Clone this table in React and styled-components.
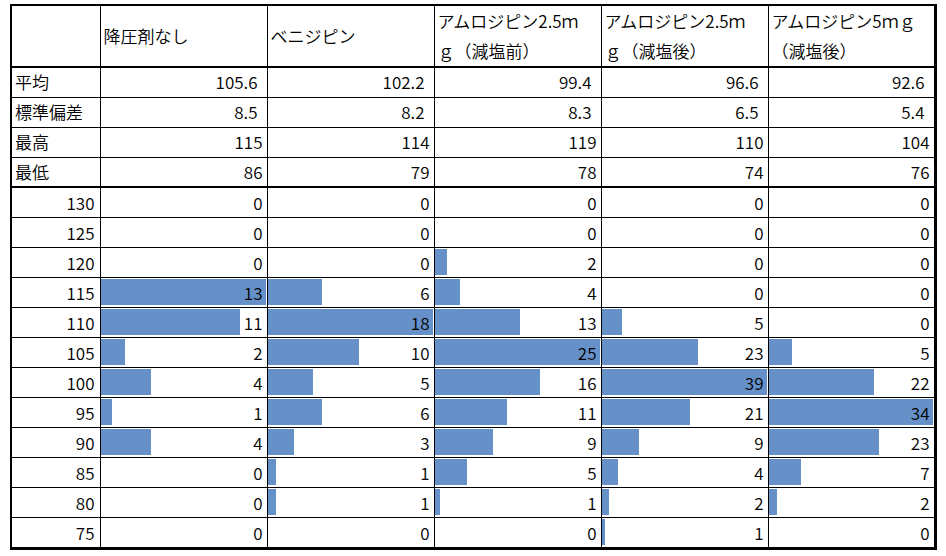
import styled, { createGlobalStyle } from 'styled-components';

const GlobalStyle = createGlobalStyle`
	body {
		margin: 0;
		background: #ffffff;
		font-family: "Noto Sans CJK JP", "Noto Sans", sans-serif;
		font-weight: 350;
		color: #000000;
	}
`;

const Page = styled.div`
	padding: 4px 0 0 10px;
`;

const Sheet = styled.table`
	border-collapse: collapse;
	table-layout: fixed;
	border: 2px solid #000;
	border-right-width: 3px;
	border-bottom-width: 3px;
	font-size: 17px;
	col:first-child { width: 89px; }
	col { width: 167px; }
`;

const HeadRow = styled.tr`
	height: 61px;
	border-bottom: 2px solid #000;
`;

const HeadCell = styled.th`
	border: 1px solid #000;
	padding: 0 3px;
	font-weight: inherit;
	text-align: left;
	vertical-align: middle;
	line-height: 30px;
	white-space: nowrap;
`;

const Row = styled.tr`
	height: 30px;
	${(p) => p.$last && 'border-bottom: 2px solid #000;'}
`;

const Label = styled.td`
	border: 1px solid #000;
	padding: 0 3px;
	text-align: ${(p) => (p.$right ? 'right' : 'left')};
	padding-right: ${(p) => (p.$right ? '5px' : '3px')};
	line-height: 28px;
	white-space: nowrap;
`;

const Num = styled.td`
	border: 1px solid #000;
	padding: 0 ${(p) => (p.$decimal ? '9px' : '4px')} 0 0;
	text-align: right;
	line-height: 28px;
`;

const BarCell = styled.td`
	border: 1px solid #000;
	padding: 0;
`;

const BarBox = styled.div`
	position: relative;
	height: 29px;
`;

const Bar = styled.div`
	position: absolute;
	left: 0;
	top: 1px;
	bottom: 2px;
	background: #6690c8;
`;

const BarValue = styled.span`
	position: relative;
	display: block;
	text-align: right;
	padding-right: 4px;
	line-height: 29px;
`;

const headers = [
	['降圧剤なし'],
	['ベニジピン'],
	['アムロジピン2.5ｍ', 'ｇ（減塩前）'],
	['アムロジピン2.5ｍ', 'ｇ（減塩後）'],
	['アムロジピン5ｍｇ', '（減塩後）'],
];

const stats = [
	{ label: '平均', values: ['105.6', '102.2', '99.4', '96.6', '92.6'], decimal: true },
	{ label: '標準偏差', values: ['8.5', '8.2', '8.3', '6.5', '5.4'], decimal: true },
	{ label: '最高', values: ['115', '114', '119', '110', '104'] },
	{ label: '最低', values: ['86', '79', '78', '74', '76'] },
];

const histogram = [
	[130, [0, 0, 0, 0, 0]],
	[125, [0, 0, 0, 0, 0]],
	[120, [0, 0, 2, 0, 0]],
	[115, [13, 6, 4, 0, 0]],
	[110, [11, 18, 13, 5, 0]],
	[105, [2, 10, 25, 23, 5]],
	[100, [4, 5, 16, 39, 22]],
	[95, [1, 6, 11, 21, 34]],
	[90, [4, 3, 9, 9, 23]],
	[85, [0, 1, 5, 4, 7]],
	[80, [0, 1, 1, 2, 2]],
	[75, [0, 0, 0, 1, 0]],
];

const maxima = [0, 1, 2, 3, 4].map((c) => Math.max(...histogram.map(([, v]) => v[c])));

const App = () => {
	return (
		<Page>
			<GlobalStyle />
			<Sheet>
				<colgroup>
					<col />
					<col />
					<col />
					<col />
					<col />
					<col />
				</colgroup>
				<thead>
					<HeadRow>
						<HeadCell />
						{headers.map((lines, i) => (
							<HeadCell key={i}>
								{lines.map((l, j) => (
									<div key={j}>{l}</div>
								))}
							</HeadCell>
						))}
					</HeadRow>
				</thead>
				<tbody>
					{stats.map((s, i) => (
						<Row key={s.label} $last={i === stats.length - 1}>
							<Label>{s.label}</Label>
							{s.values.map((v, j) => (
								<Num key={j} $decimal={s.decimal}>{v}</Num>
							))}
						</Row>
					))}
					{histogram.map(([bp, counts]) => (
						<Row key={bp}>
							<Label $right>{bp}</Label>
							{counts.map((n, j) => (
								<BarCell key={j}>
									<BarBox>
										{n > 0 && <Bar style={{ width: `calc(${(n / maxima[j]) * 100}% - 1px)` }} />}
										<BarValue>{n}</BarValue>
									</BarBox>
								</BarCell>
							))}
						</Row>
					))}
				</tbody>
			</Sheet>
		</Page>
	);
};

export default App;
